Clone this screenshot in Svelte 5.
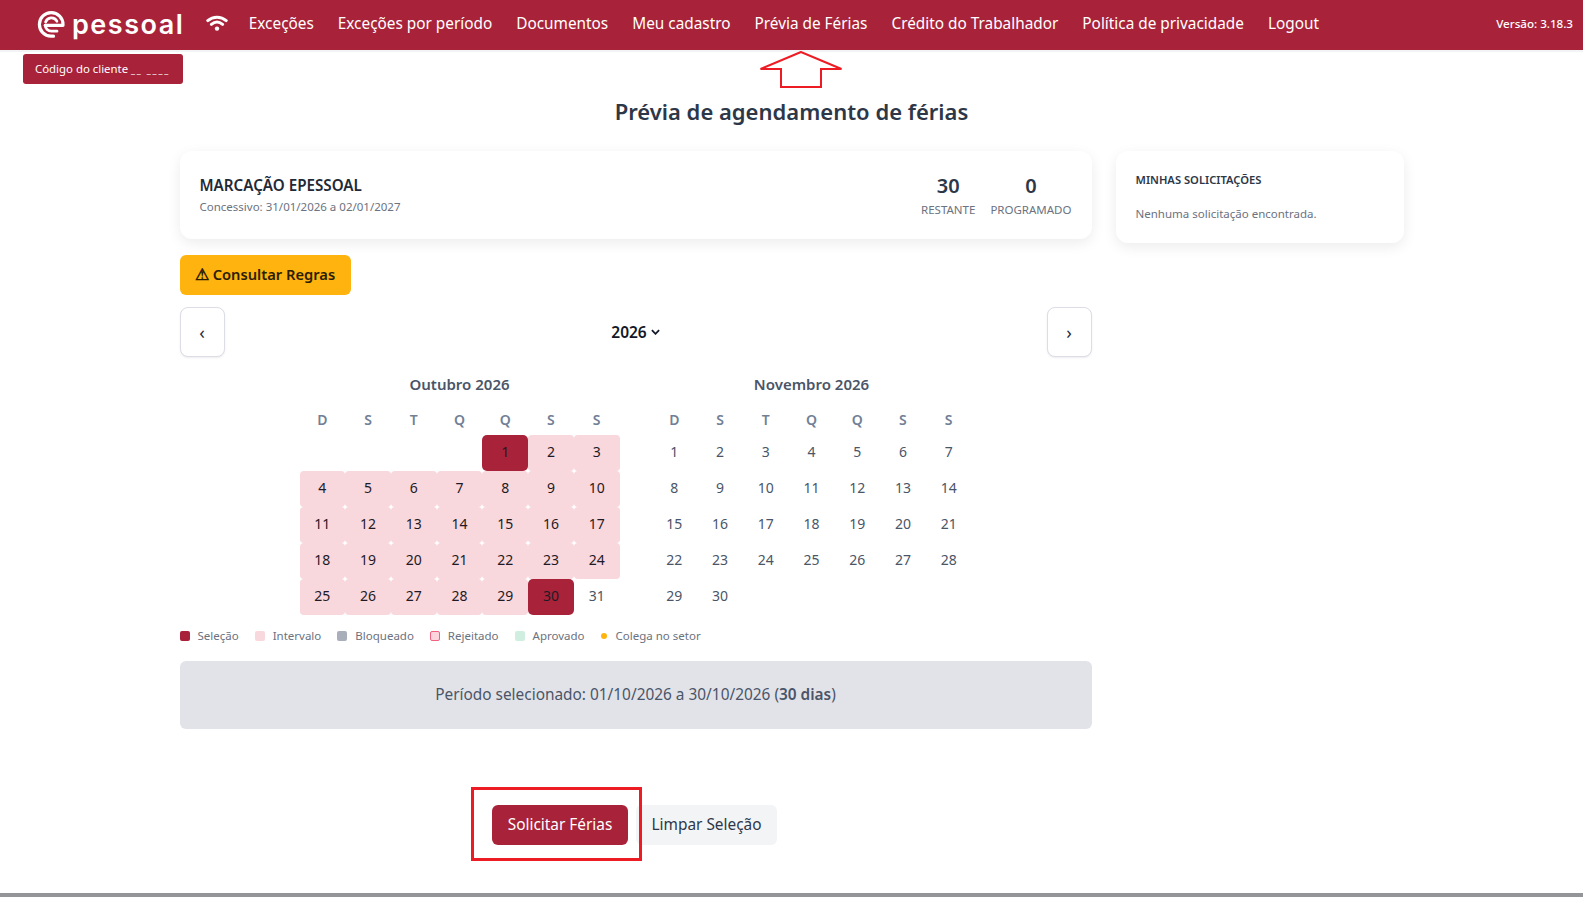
<script>
  const links = ['Exceções', 'Exceções por período', 'Documentos', 'Meu cadastro', 'Prévia de Férias', 'Crédito do Trabalhador', 'Política de privacidade', 'Logout'];
  const wd = ['D', 'S', 'T', 'Q', 'Q', 'S', 'S'];
  const months = [
    { name: 'Outubro 2026', blank: 4, days: 31, sel: true },
    { name: 'Novembro 2026', blank: 0, days: 30, sel: false }
  ];
  const legend = [
    ['Seleção', 'selc'], ['Intervalo', 'inter'], ['Bloqueado', 'bloq'],
    ['Rejeitado', 'rej'], ['Aprovado', 'apr'], ['Colega no setor', 'col']
  ];
  const range = (n) => Array.from({ length: n }, (_, i) => i + 1);
</script>

<nav class="nav">
  <div class="brand">
    <svg viewBox="0 0 28 27" width="28" height="27" aria-hidden="true">
      <path d="M16.500 25.200H14A11.800 11.800 0 1 1 26 13.500V14.300H8.200" fill="none" stroke="#fff" stroke-width="3.200" stroke-linecap="round" stroke-linejoin="round"/>
      <path d="M8.200 14.300a6.200 6.200 0 0 0 6.200 5.900H20M8.600 11a6.200 6.200 0 0 1 11.300-.8" fill="none" stroke="#fff" stroke-width="2.800" stroke-linecap="round"/>
    </svg>
    <span class="wordmark">pessoal</span>
  </div>
  <svg class="wifi" viewBox="0 0 22 16" width="22" height="16" aria-hidden="true">
    <path d="M1.800 5.600C7 1 15 1 20.200 5.600M5.400 9.300c3.400-2.700 7.800-2.700 11.200 0" fill="none" stroke="#fff" stroke-width="3" stroke-linecap="round"/>
    <circle cx="11" cy="13.600" r="2.200" fill="#fff"/>
  </svg>
  <ul class="links">
    {#each links as l}<li>{l}</li>{/each}
  </ul>
  <span class="version">Versão: 3.18.3</span>
</nav>

<div class="client">Código do cliente <span class="mask">__ ____</span></div>

<svg class="arrow" viewBox="0 0 84 38" width="84" height="38" aria-hidden="true">
  <path d="M42 1 1.500 18H22v18h40V18h20.500Z" fill="none" stroke="#ed1c24" stroke-width="2"/>
</svg>

<h1>Prévia de agendamento de férias</h1>

<div class="layout">
  <main>
    <section class="card head">
      <div>
        <div class="cname">MARCAÇÃO EPESSOAL</div>
        <div class="csub">Concessivo: 31/01/2026 a 02/01/2027</div>
      </div>
      <div class="stats">
        <div class="stat"><b>30</b><span>RESTANTE</span></div>
        <div class="stat"><b>0</b><span>PROGRAMADO</span></div>
      </div>
    </section>

    <button class="rules"><span class="warn">⚠</span> Consultar Regras</button>

    <div class="calnav">
      <button class="arrowbtn">‹</button>
      <div class="year">2026
        <svg viewBox="0 0 10 6" width="9" height="6" aria-hidden="true"><path d="M1 1l4 4 4-4" fill="none" stroke="#111827" stroke-width="2"/></svg>
      </div>
      <button class="arrowbtn">›</button>
    </div>

    <div class="months">
      {#each months as m}
        <div class="month">
          <div class="mtitle">{m.name}</div>
          <div class="grid">
            {#each wd as d}<div class="wd">{d}</div>{/each}
            {#each range(m.blank) as _}<div></div>{/each}
            {#each range(m.days) as d}
              <div class="day"
                class:inrange={m.sel && d > 1 && d < 30}
                class:picked={m.sel && (d === 1 || d === 30)}>{d}</div>
            {/each}
          </div>
        </div>
      {/each}
    </div>

    <div class="legend">
      {#each legend as [label, cls]}
        <span class="lg"><i class={cls}></i>{label}</span>
      {/each}
    </div>

    <div class="period">Período selecionado: 01/10/2026 a 30/10/2026 (<b>30 dias</b>)</div>

    <div class="actions">
      <div class="marked">
        <button class="primary">Solicitar Férias</button>
        <span class="redbox"></span>
      </div>
      <button class="ghost">Limpar Seleção</button>
    </div>
  </main>

  <aside class="card side">
    <div class="stitle">MINHAS SOLICITAÇÕES</div>
    <div class="sempty">Nenhuma solicitação encontrada.</div>
  </aside>
</div>

<div class="rule"></div>

<style>
  :global(body) {
    margin: 0;
    background: #fff;
    font-family: "Noto Sans", "Open Sans", sans-serif;
    color: #2d3748;
  }
  :global(#app) { position: relative; height: 901px; overflow: hidden; }
  button { font-family: inherit; cursor: pointer; }

  .nav {
    height: 50px;
    box-sizing: border-box;
    background: #a82339;
    display: flex;
    align-items: center;
    padding: 0 10px 4px 37px;
    box-shadow: 0 2px 0 #f3f4f6;
    color: #fff;
  }
  .brand { display: flex; align-items: center; gap: 7px; flex: none; margin-top: 3px; }
  .wordmark {
    font-family: "Inter", sans-serif;
    font-weight: 600;
    font-size: 27px;
    line-height: 27px;
    letter-spacing: 1.500px;
    margin-top: -1px;
  }
  .wifi { flex: none; margin-left: 21.500px; }
  .links { display: flex; gap: 24px; list-style: none; margin: 0 0 0 21px; padding: 0; font-size: 15.350px; flex: 1; }
  .version { font-size: 11.600px; font-weight: 500; }

  .client {
    width: 160px;
    height: 30px;
    box-sizing: border-box;
    margin: 4px 0 0 23px;
    padding-left: 12px;
    background: #a82339;
    border-radius: 3px;
    color: #fff;
    font-size: 11.400px;
    line-height: 29px;
    white-space: nowrap;
    overflow: hidden;
  }
  .mask { font-size: 9px; letter-spacing: 1.800px; }

  .arrow { position: absolute; left: 759px; top: 51px; }

  h1 {
    margin: 11px 0 23px;
    text-align: center;
    font-size: 22px;
    line-height: 33px;
    font-weight: 600;
    color: #2d3748;
  }

  .layout { display: flex; gap: 24px; width: 1224px; margin: 0 auto; align-items: flex-start; }
  main { width: 912px; flex: none; }

  .card {
    background: #fff;
    border-radius: 12px;
    box-shadow: 0 4px 14px rgba(0, 0, 0, 0.08);
  }
  .head { height: 88px; box-sizing: border-box; padding: 0 20px; display: flex; justify-content: space-between; align-items: center; }
  .cname { font-size: 15.200px; font-weight: 600; color: #1f2937; line-height: 21px; margin-top: -1px; }
  .csub { font-size: 11.500px; color: #6b7280; line-height: 16px; margin-top: 3px; }
  .stats { display: flex; gap: 15px; }
  .stat { display: flex; flex-direction: column; align-items: center; }
  .stat b { font-size: 20px; font-weight: 600; line-height: 28px; color: #2d3748; }
  .stat span { font-size: 11.500px; line-height: 18px; margin-top: 1px; color: #6b7280; }

  .rules {
    display: block;
    margin-top: 16px;
    width: 171px;
    height: 40px;
    padding: 0 0 2px;
    border: 0;
    border-radius: 6px;
    background: #ffb30f;
    color: #2b1d00;
    font-size: 14.700px;
    font-weight: 600;
    white-space: nowrap;
  }
  .warn { font-size: 16px; font-weight: 700; line-height: 1; }

  .calnav { display: flex; justify-content: space-between; align-items: center; margin-top: 12px; }
  .arrowbtn {
    width: 45px;
    height: 50px;
    box-sizing: border-box;
    background: #fff;
    border: 1px solid #dcdde6;
    border-radius: 8px;
    box-shadow: 0 1px 2px rgba(0, 0, 0, 0.08);
    font-size: 18px;
    color: #1f2937;
    padding: 0;
  }
  .year { display: flex; align-items: center; gap: 4px; font-size: 15.500px; font-weight: 600; color: #111827; }

  .months { display: flex; justify-content: center; gap: 32px; margin-top: 15px; }
  .month { width: 320px; }
  .mtitle { text-align: center; font-size: 15px; font-weight: 600; line-height: 24px; color: #4a5568; }
  .grid { display: grid; grid-template-columns: repeat(7, 1fr); grid-template-rows: 29px; grid-auto-rows: 36px; margin-top: 10px; }
  .wd { display: flex; align-items: center; justify-content: center; font-size: 14px; font-weight: 600; color: #718096; padding-bottom: 3px; }
  .day { display: flex; align-items: center; justify-content: center; font-size: 14px; color: #4a5568; padding-bottom: 3px; box-sizing: border-box; }
  .inrange { background: #f8d7dd; border-radius: 4px; color: #1f1a24; }
  .picked { background: #a82339; border-radius: 5px; color: #1f1a24; }

  .legend { display: flex; gap: 16px; margin-top: 12px; font-size: 11.500px; line-height: 18px; color: #6b7280; }
  .lg { display: flex; align-items: center; gap: 8px; }
  .lg i { width: 10px; height: 10px; border-radius: 2px; box-sizing: border-box; display: block; }
  .selc { background: #a82339; }
  .inter { background: #f8d7dd; }
  .bloq { background: #a9aebb; }
  .rej { background: #fcd5dc; border: 1px solid #f0627f; }
  .apr { background: #cfeee0; }
  .lg i.col { background: #ffb30f; border-radius: 50%; width: 6px; height: 6px; margin-right: 1px; }

  .period {
    margin-top: 16px;
    height: 68px;
    padding-bottom: 2px;
    box-sizing: border-box;
    border-radius: 6px;
    background: #e2e3e9;
    display: flex;
    align-items: center;
    justify-content: center;
    white-space: pre;
    font-size: 15.400px;
    color: #4a5568;
  }
  .period b { font-weight: 600; }

  .actions { display: flex; align-items: center; justify-content: center; gap: 8px; margin: 76px 0 0 -2px; }
  .marked { position: relative; }
  .redbox { position: absolute; box-sizing: border-box; left: -21px; right: -14px; top: -18px; bottom: -16px; border: 3px solid #ed1c24; pointer-events: none; }
  .primary, .ghost { height: 40px; border: 0; border-radius: 6px; font-size: 15.400px; padding: 0 0 2px; display: block; }
  .primary { width: 136px; background: #a82339; color: #fff; }
  .ghost { width: 141px; background: #f3f4f6; color: #2d3748; }

  .side { width: 288px; height: 92px; box-sizing: border-box; padding: 20px; }
  .stitle { font-size: 11.200px; font-weight: 600; color: #2d3748; line-height: 18px; }
  .sempty { font-size: 11.500px; color: #6b7280; margin-top: 16px; line-height: 18px; }

  .rule { position: absolute; left: 0; right: 0; top: 893px; height: 4px; background: #939598; }
</style>
